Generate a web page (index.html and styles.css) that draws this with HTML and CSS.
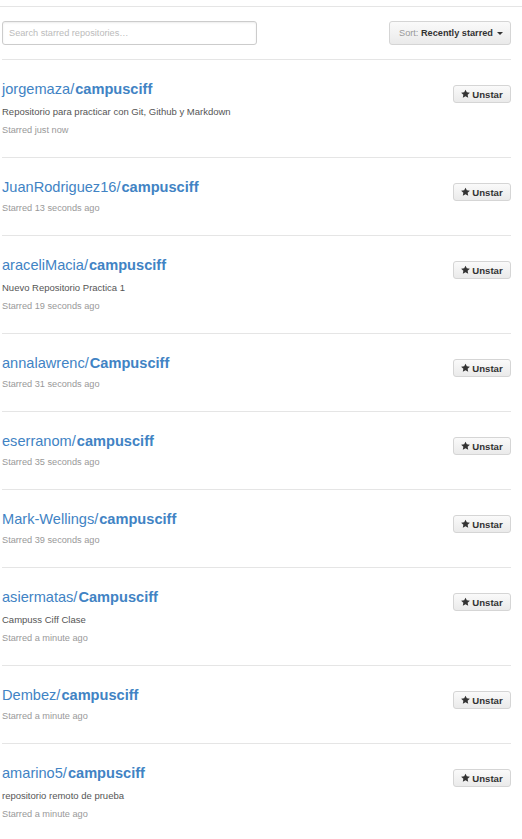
FILE: index.html
```
<!DOCTYPE html>
<html>
<head>
<meta charset="utf-8">
<link rel="stylesheet" href="styles.css">
</head>
<body>
<div class="topbar"></div>
<div class="page">
  <div class="filter-bar">
    <input class="search" type="text" placeholder="Search starred repositories…">
    <button class="sort-btn"><span class="sort-label">Sort:</span> <span class="sort-value">Recently starred</span><span class="caret"></span></button>
  </div>
  <ul class="repo-list">
    <li class="repo-item">
      <div class="repo-info">
        <h3 class="repo-name"><a href="#"><span class="owner">jorgemaza/</span><span class="repo">campusciff</span></a></h3>
        <p class="repo-desc">Repositorio para practicar con Git, Github y Markdown</p>
        <p class="repo-meta">Starred just now</p>
      </div>
      <button class="unstar"><svg class="star" viewBox="0 0 14 16" width="9" height="10"><path d="M14 6l-4.9-.64L7 1 4.9 5.36 0 6l3.6 3.26L2.67 14 7 11.67 11.33 14l-.93-4.74z"/></svg>Unstar</button>
    </li>
    <li class="repo-item">
      <div class="repo-info">
        <h3 class="repo-name"><a href="#"><span class="owner">JuanRodriguez16/</span><span class="repo">campusciff</span></a></h3>
        <p class="repo-meta">Starred 13 seconds ago</p>
      </div>
      <button class="unstar"><svg class="star" viewBox="0 0 14 16" width="9" height="10"><path d="M14 6l-4.9-.64L7 1 4.9 5.36 0 6l3.6 3.26L2.67 14 7 11.67 11.33 14l-.93-4.74z"/></svg>Unstar</button>
    </li>
    <li class="repo-item">
      <div class="repo-info">
        <h3 class="repo-name"><a href="#"><span class="owner">araceliMacia/</span><span class="repo">campusciff</span></a></h3>
        <p class="repo-desc">Nuevo Repositorio Practica 1</p>
        <p class="repo-meta">Starred 19 seconds ago</p>
      </div>
      <button class="unstar"><svg class="star" viewBox="0 0 14 16" width="9" height="10"><path d="M14 6l-4.9-.64L7 1 4.9 5.36 0 6l3.6 3.26L2.67 14 7 11.67 11.33 14l-.93-4.74z"/></svg>Unstar</button>
    </li>
    <li class="repo-item">
      <div class="repo-info">
        <h3 class="repo-name"><a href="#"><span class="owner">annalawrenc/</span><span class="repo">Campusciff</span></a></h3>
        <p class="repo-meta">Starred 31 seconds ago</p>
      </div>
      <button class="unstar"><svg class="star" viewBox="0 0 14 16" width="9" height="10"><path d="M14 6l-4.9-.64L7 1 4.9 5.36 0 6l3.6 3.26L2.67 14 7 11.67 11.33 14l-.93-4.74z"/></svg>Unstar</button>
    </li>
    <li class="repo-item">
      <div class="repo-info">
        <h3 class="repo-name"><a href="#"><span class="owner">eserranom/</span><span class="repo">campusciff</span></a></h3>
        <p class="repo-meta">Starred 35 seconds ago</p>
      </div>
      <button class="unstar"><svg class="star" viewBox="0 0 14 16" width="9" height="10"><path d="M14 6l-4.9-.64L7 1 4.9 5.36 0 6l3.6 3.26L2.67 14 7 11.67 11.33 14l-.93-4.74z"/></svg>Unstar</button>
    </li>
    <li class="repo-item">
      <div class="repo-info">
        <h3 class="repo-name"><a href="#"><span class="owner">Mark-Wellings/</span><span class="repo">campusciff</span></a></h3>
        <p class="repo-meta">Starred 39 seconds ago</p>
      </div>
      <button class="unstar"><svg class="star" viewBox="0 0 14 16" width="9" height="10"><path d="M14 6l-4.9-.64L7 1 4.9 5.36 0 6l3.6 3.26L2.67 14 7 11.67 11.33 14l-.93-4.74z"/></svg>Unstar</button>
    </li>
    <li class="repo-item">
      <div class="repo-info">
        <h3 class="repo-name"><a href="#"><span class="owner">asiermatas/</span><span class="repo">Campusciff</span></a></h3>
        <p class="repo-desc">Campuss Ciff Clase</p>
        <p class="repo-meta">Starred a minute ago</p>
      </div>
      <button class="unstar"><svg class="star" viewBox="0 0 14 16" width="9" height="10"><path d="M14 6l-4.9-.64L7 1 4.9 5.36 0 6l3.6 3.26L2.67 14 7 11.67 11.33 14l-.93-4.74z"/></svg>Unstar</button>
    </li>
    <li class="repo-item">
      <div class="repo-info">
        <h3 class="repo-name"><a href="#"><span class="owner">Dembez/</span><span class="repo">campusciff</span></a></h3>
        <p class="repo-meta">Starred a minute ago</p>
      </div>
      <button class="unstar"><svg class="star" viewBox="0 0 14 16" width="9" height="10"><path d="M14 6l-4.9-.64L7 1 4.9 5.36 0 6l3.6 3.26L2.67 14 7 11.67 11.33 14l-.93-4.74z"/></svg>Unstar</button>
    </li>
    <li class="repo-item">
      <div class="repo-info">
        <h3 class="repo-name"><a href="#"><span class="owner">amarino5/</span><span class="repo">campusciff</span></a></h3>
        <p class="repo-desc">repositorio remoto de prueba</p>
        <p class="repo-meta">Starred a minute ago</p>
      </div>
      <button class="unstar"><svg class="star" viewBox="0 0 14 16" width="9" height="10"><path d="M14 6l-4.9-.64L7 1 4.9 5.36 0 6l3.6 3.26L2.67 14 7 11.67 11.33 14l-.93-4.74z"/></svg>Unstar</button>
    </li>
  </ul>
</div>
</body>
</html>
```
FILE: styles.css
```
* { box-sizing: border-box; }
html, body { margin: 0; padding: 0; background: #fff; }
body {
  font-family: "Liberation Sans", Arial, sans-serif;
  color: #333;
  overflow: hidden;
}
.topbar {
  height: 7px;
  border-bottom: 1px solid #e5e5e5;
}
.page {
  margin-left: 2px;
  width: 509px;
}
.filter-bar {
  display: flex;
  justify-content: space-between;
  align-items: flex-start;
  padding-top: 14px;
  padding-bottom: 14px;
  border-bottom: 1px solid #e5e5e5;
}
.search {
  width: 255px;
  height: 24px;
  border: 1px solid #ccc;
  border-radius: 3px;
  padding: 0 6px;
  font-family: inherit;
  font-size: 9.2px;
  color: #333;
  box-shadow: inset 0 1px 2px rgba(0,0,0,0.075);
  outline: none;
}
.search::placeholder { color: #bbb; }
.sort-btn {
  height: 24px;
  width: 122px;
  padding: 0 0 0 9px;
  text-align: left;
  border: 1px solid #d5d5d5;
  border-radius: 3px;
  background: linear-gradient(#fafafa, #eaeaea);
  font-family: inherit;
  font-size: 9.2px;
  color: #333;
  white-space: nowrap;
}
.sort-label { color: #999; }
.sort-value { font-weight: bold; color: #333; }
.caret {
  display: inline-block;
  margin-left: 4px;
  vertical-align: middle;
  width: 0;
  height: 0;
  border-top: 3px solid #333;
  border-left: 3px solid transparent;
  border-right: 3px solid transparent;
}
.repo-list {
  list-style: none;
  margin: 0;
  padding: 0;
}
.repo-item {
  display: flex;
  justify-content: space-between;
  align-items: flex-start;
  padding: 19px 0 20px;
  border-bottom: 1px solid #e5e5e5;
}
.repo-name {
  margin: 0;
  font-size: 14.6px;
  line-height: 20px;
  font-weight: normal;
}
.repo-name a {
  color: #4183c4;
  text-decoration: none;
}
.repo-name .repo {
  font-weight: bold;
  margin-left: 1px;
}
.repo-desc {
  margin: 6px 0 0;
  font-size: 9.5px;
  line-height: 14px;
  color: #555;
}
.repo-meta {
  margin: 4px 0 0;
  font-size: 9.2px;
  line-height: 14px;
  color: #999;
}
.unstar {
  margin-top: 6px;
  display: flex;
  align-items: center;
  justify-content: center;
  width: 58px;
  height: 18px;
  padding: 0;
  border: 1px solid #d5d5d5;
  border-radius: 3px;
  background: linear-gradient(#fafafa, #eaeaea);
  font-family: inherit;
  font-size: 9.6px;
  font-weight: bold;
  color: #333;
}
.star {
  fill: #333;
  margin-right: 2px;
}
```
